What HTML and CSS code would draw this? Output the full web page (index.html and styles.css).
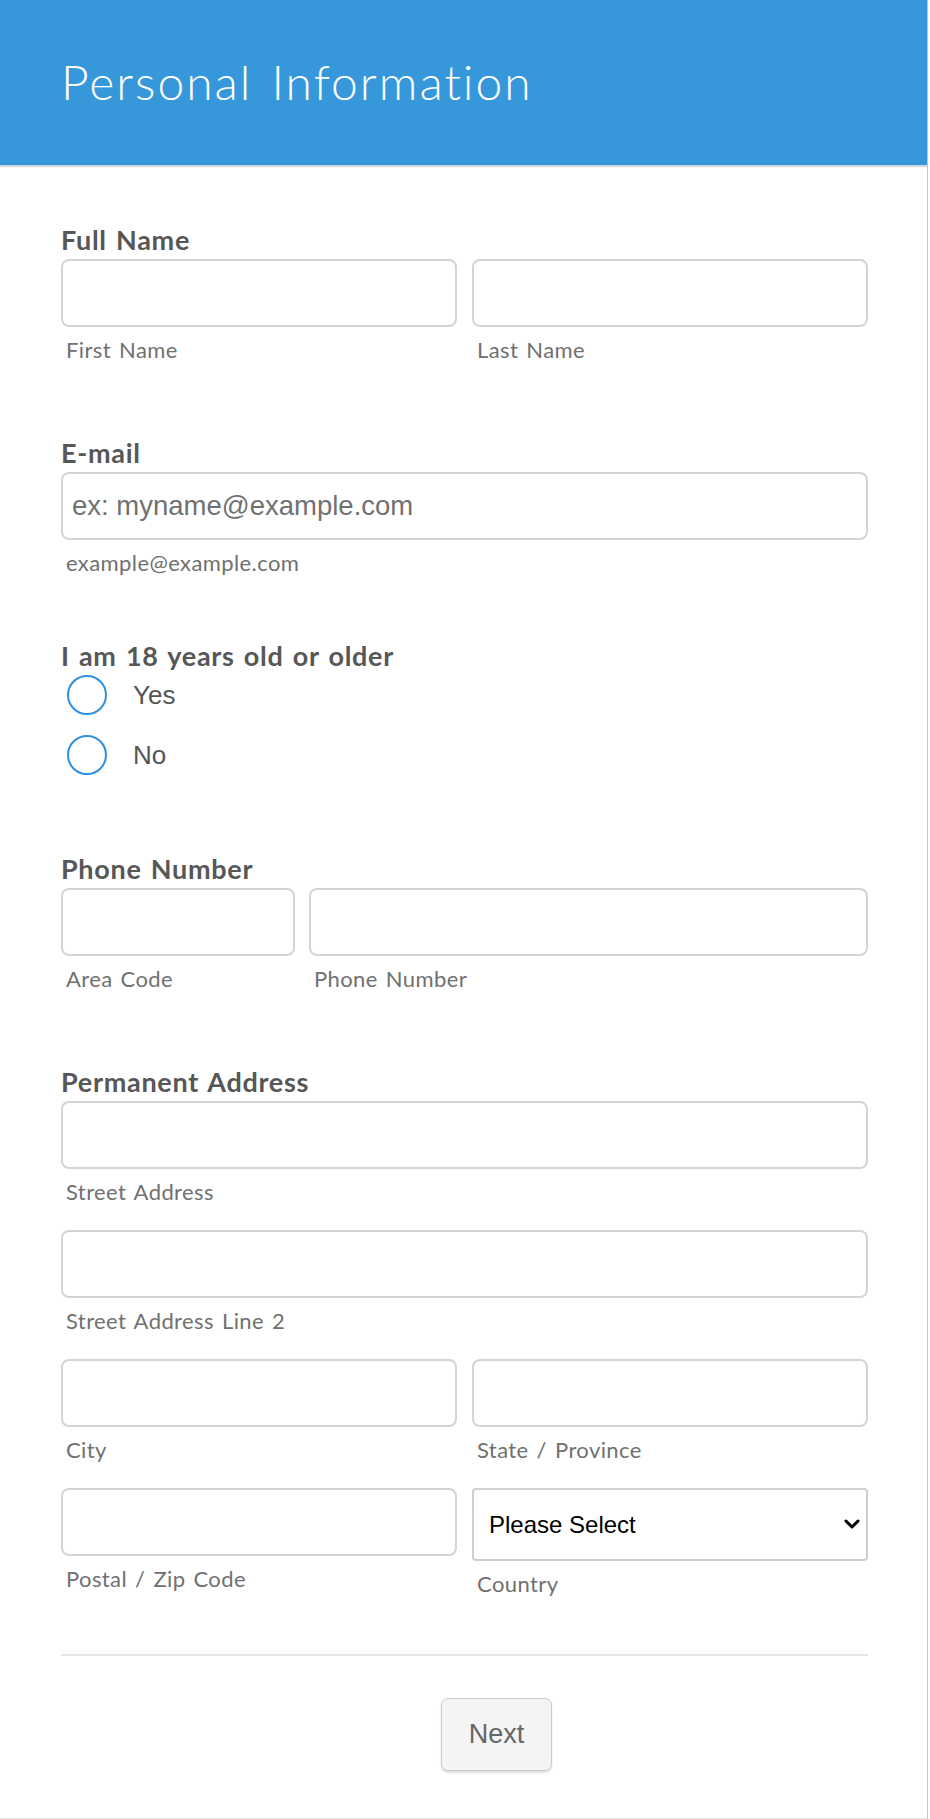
FILE: index.html
```html
<!DOCTYPE html>
<html lang="en">
<head>
<meta charset="utf-8">
<title>Personal Information</title>
<link rel="stylesheet" href="styles.css">
</head>
<body>
<div class="card">
  <header class="form-header">
    <h1 class="title">Personal Information</h1>
  </header>
  <main class="form-body">
    <section class="field field-name">
      <label class="label">Full Name</label>
      <div class="row two">
        <div class="col"><input class="input" type="text"><span class="sub">First Name</span></div>
        <div class="col"><input class="input" type="text"><span class="sub">Last Name</span></div>
      </div>
    </section>

    <section class="field field-email">
      <label class="label">E-mail</label>
      <input class="input" type="email" placeholder="ex: myname@example.com">
      <span class="sub">example@example.com</span>
    </section>

    <section class="field field-age">
      <label class="label">I am 18 years old or older</label>
      <div class="options">
        <label class="option"><input class="radio" type="radio" name="age"><span class="option-text">Yes</span></label>
        <label class="option"><input class="radio" type="radio" name="age"><span class="option-text">No</span></label>
      </div>
    </section>

    <section class="field field-phone">
      <label class="label">Phone Number</label>
      <div class="row phone">
        <div class="col"><input class="input" type="tel"><span class="sub">Area Code</span></div>
        <div class="col"><input class="input" type="tel"><span class="sub">Phone Number</span></div>
      </div>
    </section>

    <section class="field field-address">
      <label class="label">Permanent Address</label>
      <div class="addr-row">
        <input class="input" type="text"><span class="sub">Street Address</span>
      </div>
      <div class="addr-row">
        <input class="input" type="text"><span class="sub">Street Address Line 2</span>
      </div>
      <div class="addr-row row two">
        <div class="col"><input class="input" type="text"><span class="sub">City</span></div>
        <div class="col"><input class="input" type="text"><span class="sub">State / Province</span></div>
      </div>
      <div class="addr-row row two">
        <div class="col"><input class="input" type="text"><span class="sub">Postal / Zip Code</span></div>
        <div class="col">
          <div class="select-wrap">
            <select class="select">
              <option>Please Select</option>
              <option>United States</option>
              <option>Canada</option>
            </select>
            <svg class="chevron" width="16" height="11" viewBox="0 0 16 11" aria-hidden="true">
              <path d="M2 2 L8 8 L14 2" fill="none" stroke="#000" stroke-width="3" stroke-linecap="round" stroke-linejoin="round"/>
            </svg>
          </div>
          <span class="sub">Country</span>
        </div>
      </div>
    </section>

    <hr class="divider">

    <div class="actions">
      <button class="btn-next" type="button">Next</button>
    </div>
  </main>
</div>
</body>
</html>
```

FILE: styles.css
```css
* { box-sizing: border-box; }

html, body {
  margin: 0;
  padding: 0;
  background: #ffffff;
}

body {
  font-family: "Lato", "Noto Sans", sans-serif;
}

.card {
  width: 928px;
  height: 1819px;
  border-right: 1px solid #c4c4c4;
  border-bottom: 1px solid #e3e3e3;
  background: #fff;
}

.form-header {
  height: 167px;
  background: #3698db;
  border-bottom: 2px solid #d3d8de;
  padding: 58px 0 0 61px;
}

.title {
  margin: 0;
  font-family: "Lato", sans-serif;
  font-weight: 300;
  font-size: 48px;
  line-height: 48px;
  color: #ffffff;
  letter-spacing: 2px;
  word-spacing: 4px;
}

.form-body {
  padding: 0 59px 0 61px;
}

.field { display: block; }
.field-name { margin-top: 58px; }
.field-email { margin-top: 76px; }
.field-age { margin-top: 66px; }
.field-phone { margin-top: 79px; }
.field-address { margin-top: 76px; }

.label {
  display: block;
  font-family: "Lato", sans-serif;
  font-weight: 700;
  font-size: 27px;
  line-height: 30px;
  color: #575757;
  letter-spacing: 0.7px;
  word-spacing: 2px;
  margin-bottom: 4px;
}

.row { display: grid; align-items: start; }
.row.two { grid-template-columns: 1fr 1fr; column-gap: 15px; }
.row.phone { grid-template-columns: 234px 1fr; column-gap: 14px; }
.col { display: flex; flex-direction: column; }

.input {
  display: block;
  width: 100%;
  height: 68px;
  margin: 0;
  border: 2px solid #d4d4d4;
  border-radius: 8px;
  background: #fff;
  padding: 0 9px;
  font-family: "Liberation Sans", Arial, sans-serif;
  font-size: 27.5px;
  color: #333;
  outline: none;
}

.input::placeholder { color: #717171; }

.sub {
  display: block;
  margin-top: 11px;
  padding-left: 5px;
  font-family: "Lato", sans-serif;
  font-size: 22px;
  line-height: 24px;
  letter-spacing: 0.4px;
  word-spacing: 2px;
  color: #707070;
}

.options { margin-top: 1px; }

.option {
  display: flex;
  align-items: center;
  height: 40px;
  padding-left: 6px;
  gap: 26px;
}
.option + .option { margin-top: 20px; }

.radio {
  appearance: none;
  -webkit-appearance: none;
  width: 40px;
  height: 40px;
  margin: 0;
  border: 2px solid #2f8fe0;
  border-radius: 50%;
  background: #fff;
  flex: none;
}

.option-text {
  font-family: "Liberation Sans", Arial, sans-serif;
  font-size: 26px;
  color: #555555;
}

.addr-row + .addr-row { margin-top: 26px; }

.select-wrap {
  position: relative;
}

.select {
  display: block;
  width: 100%;
  height: 73px;
  margin: 0;
  border: 2px solid #cfcfcf;
  border-radius: 4px;
  background: #fff;
  padding: 0 40px 0 15px;
  font-family: "Liberation Sans", Arial, sans-serif;
  font-size: 24px;
  color: #000;
  appearance: none;
  -webkit-appearance: none;
}

.chevron {
  position: absolute;
  right: 8px;
  top: 31px;
  pointer-events: none;
}

.divider {
  margin: 58px 0 0 0;
  border: 0;
  border-top: 2px solid #e6e6e6;
  height: 0;
}

.actions {
  margin-top: 42px;
  display: flex;
  justify-content: center;
  padding-left: 64px;
}

.btn-next {
  width: 111px;
  height: 73px;
  border: 1px solid #cbcbcb;
  border-radius: 7px;
  background: #f4f4f4;
  box-shadow: 0 2px 2px rgba(0, 0, 0, 0.12);
  font-family: "Liberation Sans", Arial, sans-serif;
  font-size: 27px;
  color: #666666;
  padding: 0;
}
```
